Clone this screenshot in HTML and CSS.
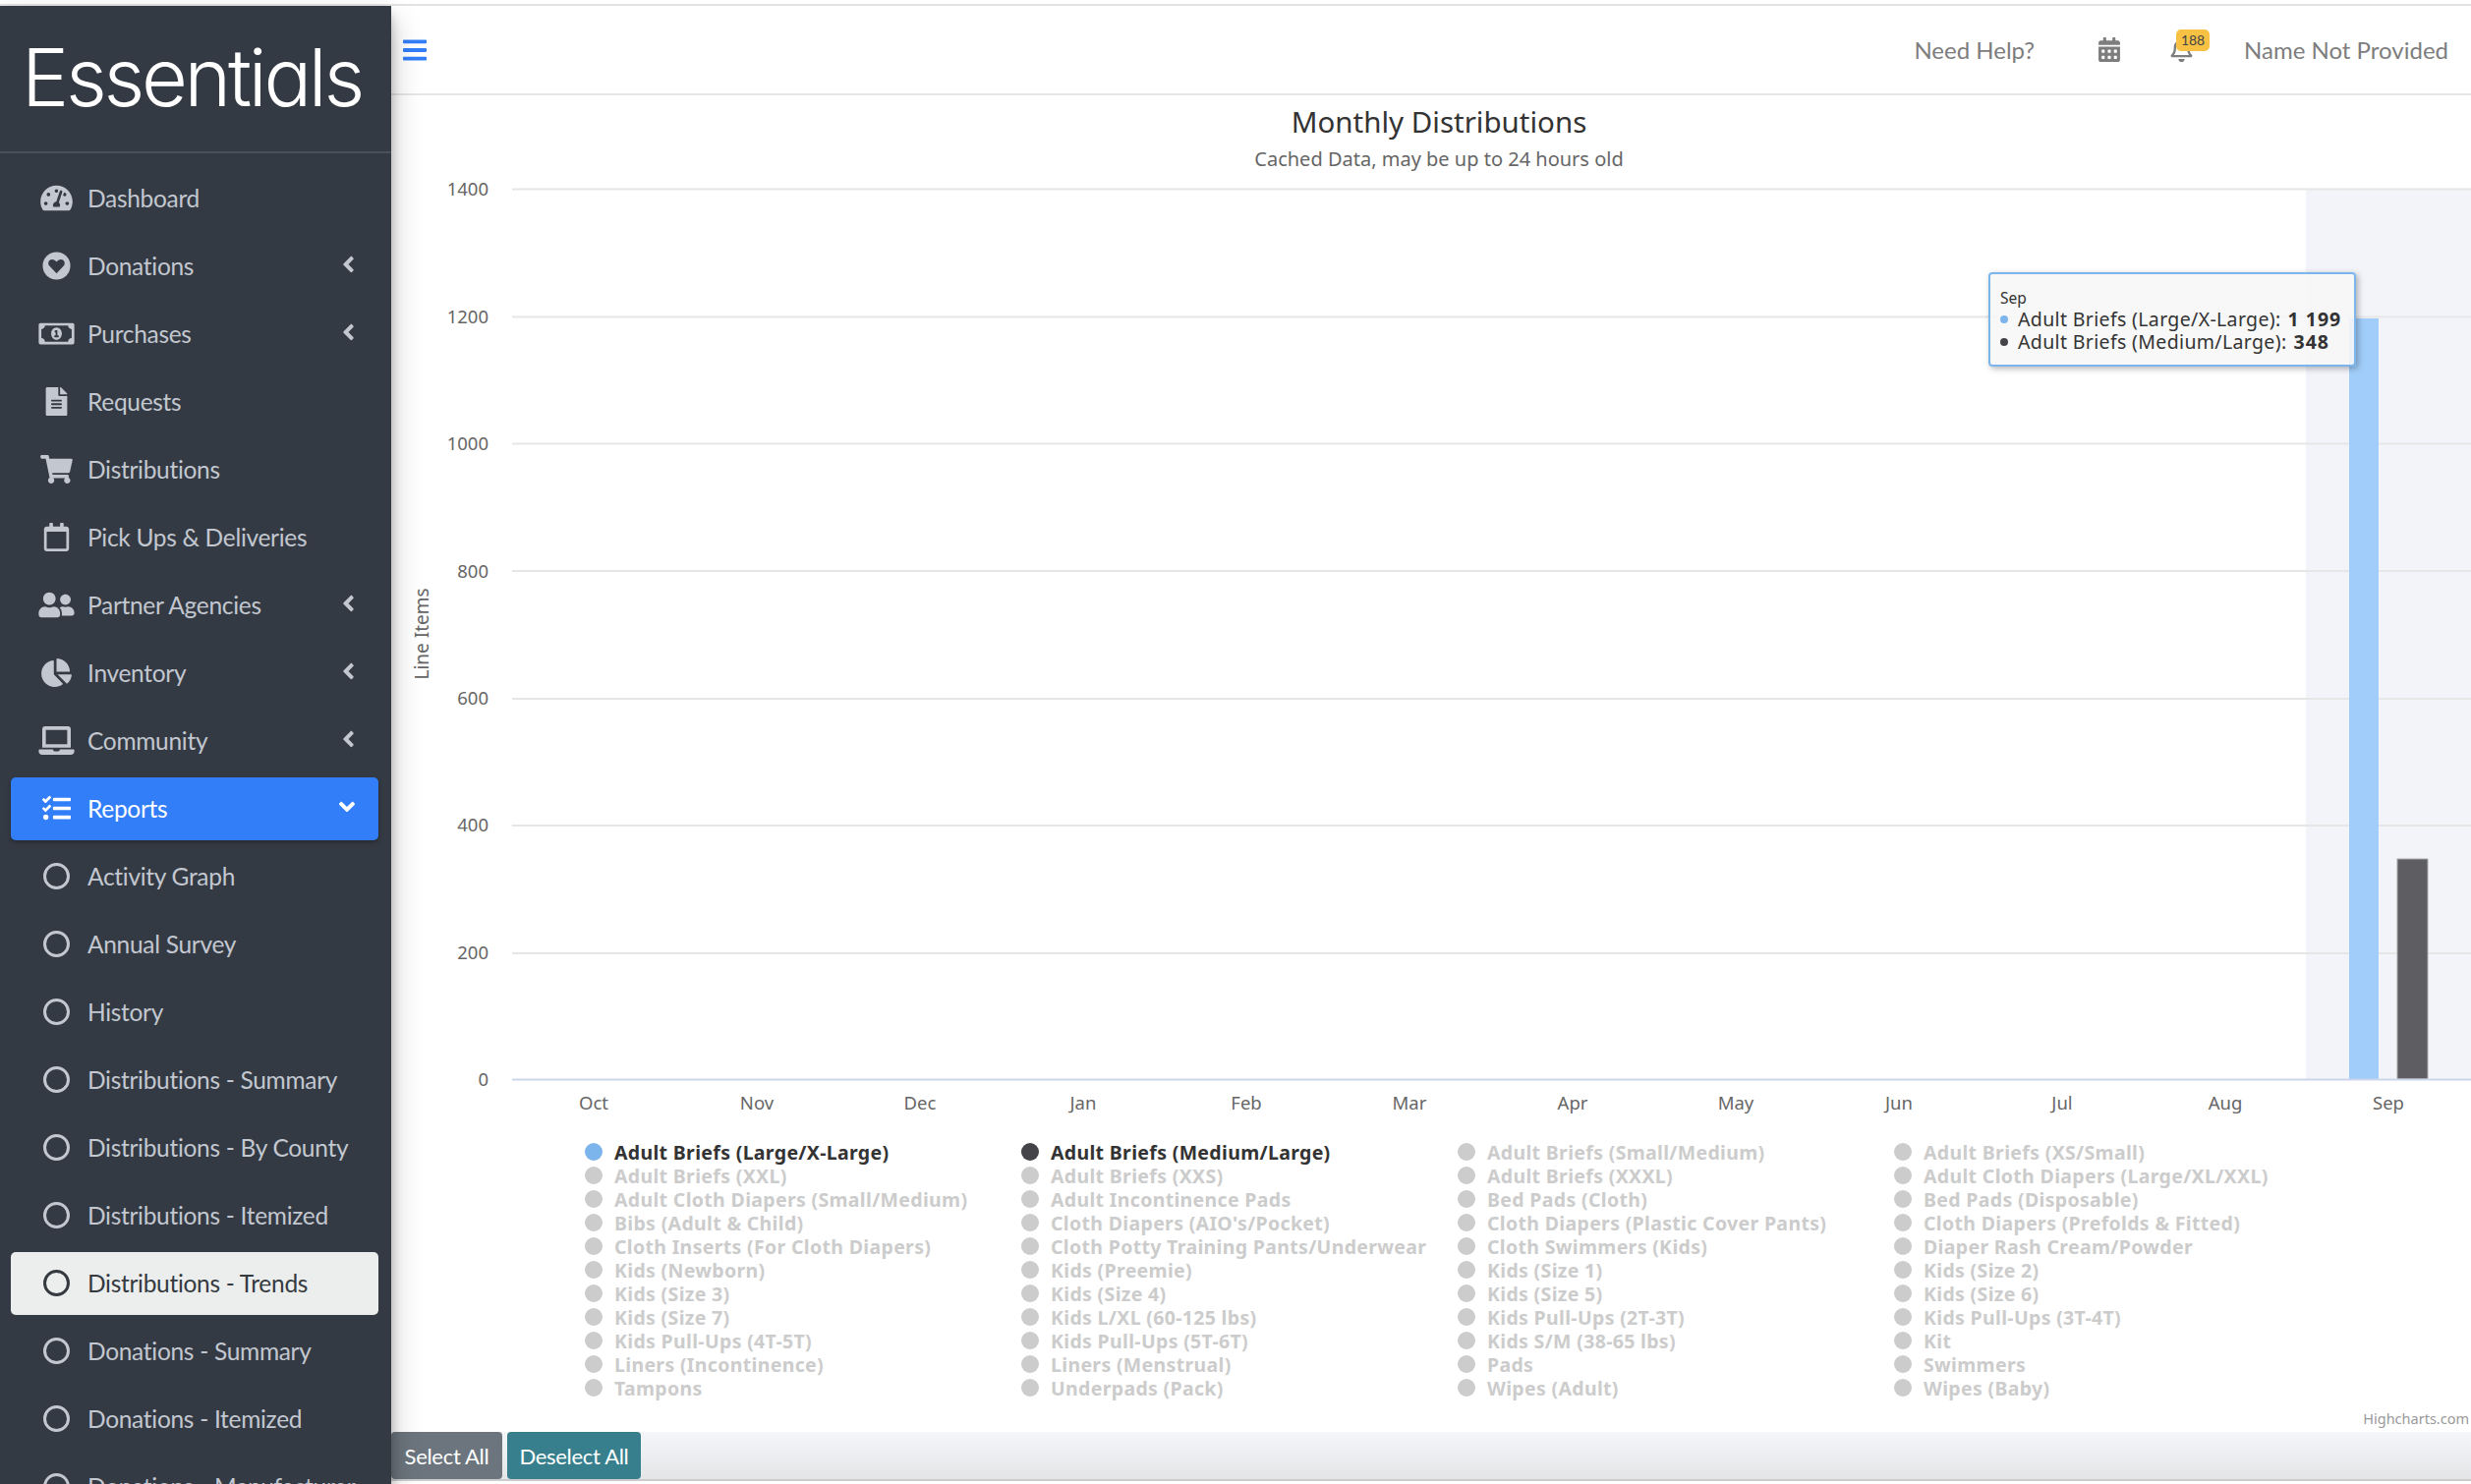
FILE: index.html
```html
<!DOCTYPE html>
<html lang="en">
  <head>
    <meta charset="UTF-8" />
    <title>Essentials - Distributions Trends</title>
    <link rel="stylesheet" href="styles.css">
  </head>
  <body>
    <div id="app">
      <aside id="sidebar">
        <div class="brand">Essentials</div>
        <ul class="nav">
          <li class="nav-item">
            <svg class="nav-icon" viewBox="0 0 576 512"><path d="M288 32C128.94 32 0 160.94 0 320c0 52.8 14.25 102.26 39.06 144.8 5.61 9.62 16.3 15.2 27.44 15.2h443c11.14 0 21.83-5.58 27.44-15.2C561.75 422.26 576 372.8 576 320c0-159.06-128.94-288-288-288zm0 64c14.71 0 26.58 10.13 30.32 23.65-1.11 2.26-2.64 4.23-3.45 6.67l-9.22 27.67c-5.13 3.49-10.97 6.01-17.64 6.01-17.67 0-32-14.33-32-32S270.33 96 288 96zM96 384c-17.67 0-32-14.33-32-32s14.33-32 32-32 32 14.33 32 32-14.33 32-32 32zm48-160c-17.67 0-32-14.33-32-32s14.33-32 32-32 32 14.33 32 32-14.33 32-32 32zm246.77-72.41l-61.33 184C343.13 347.33 352 364.54 352 384c0 11.72-3.38 22.55-8.88 32H232.88c-5.5-9.45-8.88-20.28-8.88-32 0-33.94 26.5-61.43 59.9-63.59l61.34-184.01c4.17-12.56 17.73-19.45 30.36-15.17 12.57 4.19 19.35 17.79 15.17 30.36zm14.66 57.2l15.52-46.55c3.47-1.29 7.13-2.23 11.05-2.23 17.67 0 32 14.33 32 32s-14.33 32-32 32c-11.38-.01-20.89-6.28-26.57-15.22zM480 384c-17.67 0-32-14.33-32-32s14.33-32 32-32 32 14.33 32 32-14.33 32-32 32z"/></svg>
            Dashboard
          </li>
          <li class="nav-item">
            <svg class="nav-icon" viewBox="0 0 512 512"><circle cx="256" cy="256" r="248"/><path class="heart-cut" d="M256 392L128 258C92 218 112 140 176 140c34 0 62 20 80 46 18-26 46-46 80-46 64 0 84 78 48 118z"/></svg>
            Donations
            <svg class="chevron" viewBox="0 0 256 512"><path d="M31.7 239l136-136c9.4-9.4 24.6-9.4 33.9 0l22.6 22.6c9.4 9.4 9.4 24.6 0 33.9L127.9 256l96.4 96.4c9.4 9.4 9.4 24.6 0 33.9L201.7 409c-9.4 9.4-24.6 9.4-33.9 0l-136-136c-9.5-9.4-9.5-24.6-.1-34z"/></svg>
          </li>
          <li class="nav-item">
            <svg class="nav-icon" viewBox="0 0 640 512"><path d="M320 144c-53.02 0-96 50.14-96 112 0 61.85 42.98 112 96 112 53 0 96-50.13 96-112 0-61.86-42.98-112-96-112zm40 168c0 4.42-3.58 8-8 8h-64c-4.42 0-8-3.58-8-8v-16c0-4.42 3.58-8 8-8h16v-55.44l-.47.31a7.992 7.992 0 0 1-11.09-2.22l-8.88-13.31a7.992 7.992 0 0 1 2.22-11.09l15.33-10.22a23.99 23.99 0 0 1 13.31-4.03H328c4.42 0 8 3.58 8 8v88h16c4.42 0 8 3.58 8 8v16zM608 64H32C14.33 64 0 78.33 0 96v320c0 17.67 14.33 32 32 32h576c17.67 0 32-14.33 32-32V96c0-17.67-14.33-32-32-32zm-16 272c-35.35 0-64 28.65-64 64H112c0-35.35-28.65-64-64-64V176c35.35 0 64-28.65 64-64h416c0 35.35 28.65 64 64 64v160z"/></svg>
            Purchases
            <svg class="chevron" viewBox="0 0 256 512"><path d="M31.7 239l136-136c9.4-9.4 24.6-9.4 33.9 0l22.6 22.6c9.4 9.4 9.4 24.6 0 33.9L127.9 256l96.4 96.4c9.4 9.4 9.4 24.6 0 33.9L201.7 409c-9.4 9.4-24.6 9.4-33.9 0l-136-136c-9.5-9.4-9.5-24.6-.1-34z"/></svg>
          </li>
          <li class="nav-item">
            <svg class="nav-icon" viewBox="0 0 384 512"><path d="M224 136V0H24C10.7 0 0 10.7 0 24v464c0 13.3 10.7 24 24 24h336c13.3 0 24-10.7 24-24V160H248c-13.2 0-24-10.8-24-24zm64 236c0 6.6-5.4 12-12 12H108c-6.6 0-12-5.4-12-12v-8c0-6.6 5.4-12 12-12h168c6.6 0 12 5.4 12 12v8zm0-64c0 6.6-5.4 12-12 12H108c-6.6 0-12-5.4-12-12v-8c0-6.6 5.4-12 12-12h168c6.6 0 12 5.4 12 12v8zm0-72v8c0 6.6-5.4 12-12 12H108c-6.6 0-12-5.4-12-12v-8c0-6.6 5.4-12 12-12h168c6.6 0 12 5.4 12 12zm96-114.1v6.1H256V0h6.1c6.4 0 12.5 2.5 17 7l97.9 98c4.5 4.5 7 10.6 7 16.9z"/></svg>
            Requests
          </li>
          <li class="nav-item">
            <svg class="nav-icon" viewBox="0 0 576 512"><path d="M528.12 301.319l47.273-208C578.806 78.301 567.391 64 551.99 64H159.208l-9.166-44.81C147.758 8.021 137.93 0 126.529 0H24C10.745 0 0 10.745 0 24v16c0 13.255 10.745 24 24 24h69.883l70.248 343.435C147.325 417.1 136 435.222 136 456c0 30.928 25.072 56 56 56s56-25.072 56-56c0-15.674-6.447-29.835-16.824-40h209.647C430.447 426.165 424 440.326 424 456c0 30.928 25.072 56 56 56s56-25.072 56-56c0-22.172-12.888-41.332-31.579-50.405l5.517-24.276c3.413-15.018-8.002-29.319-23.403-29.319H218.117l-6.545-32h293.145c11.206 0 20.92-7.754 23.403-18.681z"/></svg>
            Distributions
          </li>
          <li class="nav-item">
            <svg class="nav-icon" viewBox="0 0 448 512"><path d="M400 64h-48V12c0-6.6-5.4-12-12-12h-40c-6.6 0-12 5.4-12 12v52H160V12c0-6.6-5.4-12-12-12h-40c-6.6 0-12 5.4-12 12v52H48C21.5 64 0 85.5 0 112v352c0 26.5 21.5 48 48 48h352c26.5 0 48-21.5 48-48V112c0-26.5-21.5-48-48-48zm-6 400H54c-3.3 0-6-2.7-6-6V160h352v298c0 3.3-2.7 6-6 6z"/></svg>
            Pick Ups &amp; Deliveries
          </li>
          <li class="nav-item">
            <svg class="nav-icon" viewBox="0 0 640 512"><path d="M192 256c61.9 0 112-50.1 112-112S253.9 32 192 32 80 82.1 80 144s50.1 112 112 112zm76.8 32h-8.3c-20.8 10-43.9 16-68.5 16s-47.6-6-68.5-16h-8.3C51.6 288 0 339.6 0 403.2V432c0 26.5 21.5 48 48 48h288c26.5 0 48-21.5 48-48v-28.8c0-63.6-51.6-115.2-115.2-115.2zM480 256c53 0 96-43 96-96s-43-96-96-96-96 43-96 96 43 96 96 96zm48 32h-3.8c-13.9 4.8-28.6 8-44.2 8s-30.3-3.2-44.2-8H432c-20.4 0-39.2 5.9-55.7 15.4 24.4 26.3 39.7 61.2 39.7 99.8v38.4c0 2.2-.5 4.3-.6 6.4H592c26.5 0 48-21.5 48-48 0-61.9-50.1-112-112-112z"/></svg>
            Partner Agencies
            <svg class="chevron" viewBox="0 0 256 512"><path d="M31.7 239l136-136c9.4-9.4 24.6-9.4 33.9 0l22.6 22.6c9.4 9.4 9.4 24.6 0 33.9L127.9 256l96.4 96.4c9.4 9.4 9.4 24.6 0 33.9L201.7 409c-9.4 9.4-24.6 9.4-33.9 0l-136-136c-9.5-9.4-9.5-24.6-.1-34z"/></svg>
          </li>
          <li class="nav-item">
            <svg class="nav-icon" viewBox="0 0 544 512"><path d="M527.79 288H290.5l158.03 158.03c6.04 6.04 15.98 6.53 22.19.68 38.7-36.46 65.32-85.61 73.13-140.86 1.34-9.46-6.51-17.85-16.06-17.85zm-15.83-64.8C503.72 103.74 408.26 8.28 288.8.04 279.68-.59 272 7.1 272 16.24V240h223.77c9.14 0 16.82-7.68 16.19-16.8zM224 288V50.71c0-9.55-8.39-17.4-17.84-16.06C86.99 51.49-4.1 155.6.14 280.37 4.5 408.51 114.83 513.59 243.03 511.98c50.4-.63 96.97-16.87 135.26-44.03 7.9-5.6 8.42-17.23 1.57-24.08L224 288z"/></svg>
            Inventory
            <svg class="chevron" viewBox="0 0 256 512"><path d="M31.7 239l136-136c9.4-9.4 24.6-9.4 33.9 0l22.6 22.6c9.4 9.4 9.4 24.6 0 33.9L127.9 256l96.4 96.4c9.4 9.4 9.4 24.6 0 33.9L201.7 409c-9.4 9.4-24.6 9.4-33.9 0l-136-136c-9.5-9.4-9.5-24.6-.1-34z"/></svg>
          </li>
          <li class="nav-item">
            <svg class="nav-icon" viewBox="0 0 640 512"><path d="M624 416H381.54c-.74 19.81-14.71 32-32.74 32H288c-18.69 0-33.02-17.47-32.77-32H16c-8.8 0-16 7.2-16 16v16c0 35.2 28.8 64 64 64h512c35.2 0 64-28.8 64-64v-16c0-8.8-7.2-16-16-16zM576 48c0-26.4-21.6-48-48-48H112C85.6 0 64 21.6 64 48v336h512V48zm-64 272H128V64h384v256z"/></svg>
            Community
            <svg class="chevron" viewBox="0 0 256 512"><path d="M31.7 239l136-136c9.4-9.4 24.6-9.4 33.9 0l22.6 22.6c9.4 9.4 9.4 24.6 0 33.9L127.9 256l96.4 96.4c9.4 9.4 9.4 24.6 0 33.9L201.7 409c-9.4 9.4-24.6 9.4-33.9 0l-136-136c-9.5-9.4-9.5-24.6-.1-34z"/></svg>
          </li>
          <li class="nav-item active">
            <svg class="nav-icon" viewBox="0 0 512 512"><path d="M139.61 35.5a12 12 0 0 0-17 0L58.93 98.81l-22.7-22.12a12 12 0 0 0-17 0L3.53 92.41a12 12 0 0 0 0 17l47.59 47.4a12.78 12.78 0 0 0 17.61 0l15.59-15.62L156.52 69a12.09 12.09 0 0 0 .09-17zm0 159.19a12 12 0 0 0-17 0l-63.68 63.72-22.7-22.1a12 12 0 0 0-17 0L3.53 252a12 12 0 0 0 0 17L51 316.5a12.77 12.77 0 0 0 17.6 0l15.7-15.69 72.2-72.22a12 12 0 0 0 .09-16.9zM64 368c-26.49 0-48.59 21.5-48.59 48S37.53 464 64 464a48 48 0 0 0 0-96zm432 16H208a16 16 0 0 0-16 16v32a16 16 0 0 0 16 16h288a16 16 0 0 0 16-16v-32a16 16 0 0 0-16-16zm0-320H208a16 16 0 0 0-16 16v32a16 16 0 0 0 16 16h288a16 16 0 0 0 16-16V80a16 16 0 0 0-16-16zm0 160H208a16 16 0 0 0-16 16v32a16 16 0 0 0 16 16h288a16 16 0 0 0 16-16v-32a16 16 0 0 0-16-16z"/></svg>
            Reports
            <svg class="chevron-open" viewBox="0 0 320 512"><path d="M143 352.3L7 216.3c-9.4-9.4-9.4-24.6 0-33.9l22.6-22.6c9.4-9.4 24.6-9.4 33.9 0l96.4 96.4 96.4-96.4c9.4-9.4 24.6-9.4 33.9 0l22.6 22.6c9.4 9.4 9.4 24.6 0 33.9l-136 136c-9.2 9.4-24.4 9.4-33.8 0z"/></svg>
          </li>
          <li class="nav-item"><span class="nav-circle"></span>Activity Graph</li>
          <li class="nav-item"><span class="nav-circle"></span>Annual Survey</li>
          <li class="nav-item"><span class="nav-circle"></span>History</li>
          <li class="nav-item"><span class="nav-circle"></span>Distributions - Summary</li>
          <li class="nav-item"><span class="nav-circle"></span>Distributions - By County</li>
          <li class="nav-item"><span class="nav-circle"></span>Distributions - Itemized</li>
          <li class="nav-item current"><span class="nav-circle"></span>Distributions - Trends</li>
          <li class="nav-item"><span class="nav-circle"></span>Donations - Summary</li>
          <li class="nav-item"><span class="nav-circle"></span>Donations - Itemized</li>
          <li class="nav-item"><span class="nav-circle"></span>Donations - Manufacturer</li>
        </ul>
      </aside>

      <main id="content">
        <div id="topbar">
          <svg class="menu-toggle" viewBox="0 0 448 512"><path d="M16 132h416c8.837 0 16-7.163 16-16V76c0-8.837-7.163-16-16-16H16C7.163 60 0 67.163 0 76v40c0 8.837 7.163 16 16 16zm0 160h416c8.837 0 16-7.163 16-16v-40c0-8.837-7.163-16-16-16H16c-8.837 0-16 7.163-16 16v40c0 8.837 7.163 16 16 16zm0 160h416c8.837 0 16-7.163 16-16v-40c0-8.837-7.163-16-16-16H16c-8.837 0-16 7.163-16 16v40c0 8.837 7.163 16 16 16z"/></svg>
          <div class="top-links">
            <span>Need Help?</span>
            <svg class="top-calendar" viewBox="0 0 448 512"><path d="M0 464c0 26.5 21.5 48 48 48h352c26.5 0 48-21.5 48-48V192H0v272zm320-196c0-6.6 5.4-12 12-12h40c6.6 0 12 5.4 12 12v40c0 6.6-5.4 12-12 12h-40c-6.6 0-12-5.4-12-12v-40zm0 128c0-6.6 5.4-12 12-12h40c6.6 0 12 5.4 12 12v40c0 6.6-5.4 12-12 12h-40c-6.6 0-12-5.4-12-12v-40zM192 268c0-6.6 5.4-12 12-12h40c6.6 0 12 5.4 12 12v40c0 6.6-5.4 12-12 12h-40c-6.6 0-12-5.4-12-12v-40zm0 128c0-6.6 5.4-12 12-12h40c6.6 0 12 5.4 12 12v40c0 6.6-5.4 12-12 12h-40c-6.6 0-12-5.4-12-12v-40zM64 268c0-6.6 5.4-12 12-12h40c6.6 0 12 5.4 12 12v40c0 6.6-5.4 12-12 12H76c-6.6 0-12-5.4-12-12v-40zm0 128c0-6.6 5.4-12 12-12h40c6.6 0 12 5.4 12 12v40c0 6.6-5.4 12-12 12H76c-6.6 0-12-5.4-12-12v-40zM400 64h-48V16c0-8.8-7.2-16-16-16h-32c-8.8 0-16 7.2-16 16v48H160V16c0-8.8-7.2-16-16-16h-32c-8.8 0-16 7.2-16 16v48H48C21.5 64 0 85.5 0 112v48h448v-48c0-26.5-21.5-48-48-48z"/></svg>
            <div class="bell-wrap">
              <svg class="top-bell" viewBox="0 0 448 512"><path d="M439.39 362.29c-19.32-20.76-55.47-51.99-55.47-154.29 0-77.7-54.48-139.9-127.94-155.16V32c0-17.67-14.32-32-31.98-32s-31.98 14.33-31.98 32v20.84C118.56 68.1 64.08 130.3 64.08 208c0 102.3-36.15 133.53-55.47 154.29-6 6.45-8.66 14.16-8.61 21.71.11 16.4 12.98 32 32.1 32h383.8c19.12 0 32-15.6 32.1-32 .05-7.55-2.61-15.27-8.61-21.71zM67.53 368c21.22-27.97 44.42-74.33 44.53-159.42 0-.2-.06-.38-.06-.58 0-61.86 50.14-112 112-112s112 50.14 112 112c0 .2-.06.38-.06.58.11 85.1 23.31 131.46 44.53 159.42H67.53zM224 512c35.32 0 63.97-28.65 63.97-64H160.03c0 35.35 28.65 64 63.97 64z"/></svg>
              <span class="badge">188</span>
            </div>
            <span>Name Not Provided</span>
          </div>
        </div>

        <section id="chart">
          <h2 class="chart-title">Monthly Distributions</h2>
          <p class="chart-subtitle">Cached Data, may be up to 24 hours old</p>

          <svg class="plot" viewBox="0 0 2116 970">
            <rect class="hover-band" x="1948" y="16" width="168" height="906"/>
            <g class="grid">
              <line x1="123" x2="2116" y1="16.5" y2="16.5"/>
              <line x1="123" x2="2116" y1="146.5" y2="146.5"/>
              <line x1="123" x2="2116" y1="275.5" y2="275.5"/>
              <line x1="123" x2="2116" y1="405" y2="405"/>
              <line x1="123" x2="2116" y1="535" y2="535"/>
              <line x1="123" x2="2116" y1="664" y2="664"/>
              <line x1="123" x2="2116" y1="794" y2="794"/>
            </g>
            <rect class="bar-large" x="1992" y="148" width="30" height="774"/>
            <rect class="bar-medium" x="2041" y="698" width="31" height="224"/>
            <line class="axis-line" x1="123" x2="2116" y1="922.5" y2="922.5"/>
            <g class="y-labels">
              <text x="99" y="23">1400</text>
              <text x="99" y="153">1200</text>
              <text x="99" y="282">1000</text>
              <text x="99" y="412">800</text>
              <text x="99" y="541">600</text>
              <text x="99" y="670">400</text>
              <text x="99" y="800">200</text>
              <text x="99" y="929">0</text>
            </g>
            <g class="x-labels">
              <text x="206" y="953">Oct</text>
              <text x="372" y="953">Nov</text>
              <text x="538" y="953">Dec</text>
              <text x="704" y="953">Jan</text>
              <text x="870" y="953">Feb</text>
              <text x="1036" y="953">Mar</text>
              <text x="1202" y="953">Apr</text>
              <text x="1368" y="953">May</text>
              <text x="1534" y="953">Jun</text>
              <text x="1700" y="953">Jul</text>
              <text x="1866" y="953">Aug</text>
              <text x="2032" y="953">Sep</text>
            </g>
            <text class="y-title" transform="translate(38 469) rotate(-90)">Line Items</text>
          </svg>

          <ul class="legend">
            <li class="legend-item shown"><i class="dot dot-large"></i>Adult Briefs (Large/X-Large)</li>
            <li class="legend-item shown"><i class="dot dot-medium"></i>Adult Briefs (Medium/Large)</li>
            <li class="legend-item"><i class="dot"></i>Adult Briefs (Small/Medium)</li>
            <li class="legend-item"><i class="dot"></i>Adult Briefs (XS/Small)</li>
            <li class="legend-item"><i class="dot"></i>Adult Briefs (XXL)</li>
            <li class="legend-item"><i class="dot"></i>Adult Briefs (XXS)</li>
            <li class="legend-item"><i class="dot"></i>Adult Briefs (XXXL)</li>
            <li class="legend-item"><i class="dot"></i>Adult Cloth Diapers (Large/XL/XXL)</li>
            <li class="legend-item"><i class="dot"></i>Adult Cloth Diapers (Small/Medium)</li>
            <li class="legend-item"><i class="dot"></i>Adult Incontinence Pads</li>
            <li class="legend-item"><i class="dot"></i>Bed Pads (Cloth)</li>
            <li class="legend-item"><i class="dot"></i>Bed Pads (Disposable)</li>
            <li class="legend-item"><i class="dot"></i>Bibs (Adult &amp; Child)</li>
            <li class="legend-item"><i class="dot"></i>Cloth Diapers (AIO's/Pocket)</li>
            <li class="legend-item"><i class="dot"></i>Cloth Diapers (Plastic Cover Pants)</li>
            <li class="legend-item"><i class="dot"></i>Cloth Diapers (Prefolds &amp; Fitted)</li>
            <li class="legend-item"><i class="dot"></i>Cloth Inserts (For Cloth Diapers)</li>
            <li class="legend-item"><i class="dot"></i>Cloth Potty Training Pants/Underwear</li>
            <li class="legend-item"><i class="dot"></i>Cloth Swimmers (Kids)</li>
            <li class="legend-item"><i class="dot"></i>Diaper Rash Cream/Powder</li>
            <li class="legend-item"><i class="dot"></i>Kids (Newborn)</li>
            <li class="legend-item"><i class="dot"></i>Kids (Preemie)</li>
            <li class="legend-item"><i class="dot"></i>Kids (Size 1)</li>
            <li class="legend-item"><i class="dot"></i>Kids (Size 2)</li>
            <li class="legend-item"><i class="dot"></i>Kids (Size 3)</li>
            <li class="legend-item"><i class="dot"></i>Kids (Size 4)</li>
            <li class="legend-item"><i class="dot"></i>Kids (Size 5)</li>
            <li class="legend-item"><i class="dot"></i>Kids (Size 6)</li>
            <li class="legend-item"><i class="dot"></i>Kids (Size 7)</li>
            <li class="legend-item"><i class="dot"></i>Kids L/XL (60-125 lbs)</li>
            <li class="legend-item"><i class="dot"></i>Kids Pull-Ups (2T-3T)</li>
            <li class="legend-item"><i class="dot"></i>Kids Pull-Ups (3T-4T)</li>
            <li class="legend-item"><i class="dot"></i>Kids Pull-Ups (4T-5T)</li>
            <li class="legend-item"><i class="dot"></i>Kids Pull-Ups (5T-6T)</li>
            <li class="legend-item"><i class="dot"></i>Kids S/M (38-65 lbs)</li>
            <li class="legend-item"><i class="dot"></i>Kit</li>
            <li class="legend-item"><i class="dot"></i>Liners (Incontinence)</li>
            <li class="legend-item"><i class="dot"></i>Liners (Menstrual)</li>
            <li class="legend-item"><i class="dot"></i>Pads</li>
            <li class="legend-item"><i class="dot"></i>Swimmers</li>
            <li class="legend-item"><i class="dot"></i>Tampons</li>
            <li class="legend-item"><i class="dot"></i>Underpads (Pack)</li>
            <li class="legend-item"><i class="dot"></i>Wipes (Adult)</li>
            <li class="legend-item"><i class="dot"></i>Wipes (Baby)</li>
          </ul>
          <div class="credits">Highcharts.com</div>

          <div class="tooltip">
            <div class="tooltip-month">Sep</div>
            <div class="tooltip-row"><i class="tip-dot dot-large"></i>Adult Briefs (Large/X-Large): <b>1 199</b></div>
            <div class="tooltip-row"><i class="tip-dot dot-medium"></i>Adult Briefs (Medium/Large): <b>348</b></div>
          </div>
        </section>

        <div id="chart-actions">
          <button class="btn btn-select">Select All</button>
          <button class="btn btn-deselect">Deselect All</button>
        </div>
      </main>
    </div>
  </body>
</html>
```

FILE: styles.css
```css
* {
  box-sizing: border-box;
}
html, body {
  margin: 0;
  height: 1510px;
  overflow: hidden;
  background: #fff;
}
body {
  padding-top: 4px;
  font-family: "Lato", "Noto Sans", sans-serif;
  font-size: 24.5px;
}
#app {
  display: flex;
  height: 1506px;
  border-top: 2px solid #e3e3e3;
}

/* sidebar */
#sidebar {
  flex: 0 0 398px;
  position: relative;
  z-index: 2;
  overflow: hidden;
  background: #343a43;
  color: #c2c7d0;
  box-shadow: 0 14px 28px rgba(0, 0, 0, .25), 0 10px 10px rgba(0, 0, 0, .22);
}
.brand {
  height: 150px;
  border-bottom: 2px solid #4b515b;
  padding: 23px 0 0 22px;
  color: #fff;
  font-family: "Inter", sans-serif;
  font-weight: 300;
  font-size: 81px;
  line-height: 100px;
  letter-spacing: -3.3px;
  font-feature-settings: "cv11";
}
.nav {
  list-style: none;
  margin: 0;
  padding: 14px 13px 0 11px;
}
.nav-item {
  display: flex;
  align-items: center;
  height: 64px;
  margin-bottom: 5px;
  padding: 0 24px 2px 28px;
  border-radius: 5px;
  letter-spacing: -.3px;
  white-space: nowrap;
}
.nav-icon {
  flex: 0 0 37px;
  height: 29px;
  margin-right: 13px;
  fill: currentColor;
}
.nav-circle {
  flex: 0 0 27px;
  height: 27px;
  margin: 0 18px 0 5px;
  border: 3px solid currentColor;
  border-radius: 50%;
}
.heart-cut {
  fill: #343a43;
}
.chevron {
  width: 13px;
  height: 26px;
  margin: -2px 0 0 auto;
  fill: currentColor;
}
.chevron-open {
  width: 16px;
  height: 26px;
  margin: -2px 0 0 auto;
  fill: currentColor;
}
.nav-item.active {
  background: #327ef8;
  color: #fff;
  box-shadow: 0 2px 4px rgba(0, 0, 0, .3);
}
.nav-item.current {
  background: #eceeee;
  color: #343a40;
}

/* top bar */
#content {
  flex: 1;
  min-width: 0;
  display: flex;
  flex-direction: column;
  padding-bottom: 3px;
}
#topbar {
  display: flex;
  align-items: center;
  justify-content: space-between;
  flex: 0 0 91px;
  padding: 0 23px 0 12px;
  border-bottom: 2px solid #e4e6ea;
}
.menu-toggle {
  width: 24px;
  height: 28px;
  fill: #327ef8;
}
.top-links {
  display: flex;
  align-items: center;
  color: #7d7d7d;
  font-size: 24px;
}
.top-calendar {
  width: 22px;
  height: 25px;
  margin: 0 51px 0 65px;
  fill: #7d7d7d;
}
.bell-wrap {
  position: relative;
  width: 23px;
  height: 25px;
  margin-right: 52px;
}
.top-bell {
  width: 23px;
  height: 25px;
  fill: #7d7d7d;
}
.badge {
  position: absolute;
  top: -8px;
  left: 6px;
  width: 34px;
  height: 22px;
  border-radius: 5px;
  background: #f7c244;
  color: #444;
  font-size: 14px;
  line-height: 22px;
  text-align: center;
}

/* chart */
#chart {
  flex: 1;
  position: relative;
  background: #fff;
  font-family: "Noto Sans", sans-serif;
}
.chart-title {
  margin: 0;
  padding: 9px 0 0 16px;
  color: #333;
  font-weight: 400;
  font-size: 29.5px;
  line-height: 36px;
  text-align: center;
}
.chart-subtitle {
  margin: 7px 0 0;
  padding-left: 16px;
  color: #666;
  font-size: 20px;
  line-height: 26px;
  text-align: center;
}
.plot {
  display: block;
  width: 2116px;
  height: 970px;
  margin-top: 1px;
}
.hover-band {
  fill: #f2f4fa;
}
.grid line {
  stroke: #e6e6e6;
  stroke-width: 2;
}
.axis-line {
  stroke: #ccd6eb;
  stroke-width: 2;
}
.bar-large {
  fill: #a0cdf9;
}
.bar-medium {
  fill: #5e5d62;
  stroke: #aaa;
  stroke-width: 1;
}
.plot text {
  fill: #666;
  font-size: 18.5px;
}
.y-labels text {
  text-anchor: end;
}
.x-labels text, .y-title {
  text-anchor: middle;
}
.plot .y-title {
  font-size: 19px;
}
.legend {
  list-style: none;
  display: grid;
  grid-template-columns: repeat(4, 444px);
  grid-auto-rows: 24px;
  margin: 14px 0 0;
  padding: 0 0 0 197px;
}
.legend-item {
  display: flex;
  align-items: center;
  color: #ccc;
  font-weight: 700;
  font-size: 19.5px;
  letter-spacing: .33px;
  white-space: nowrap;
}
.legend-item.shown {
  color: #333;
}
.dot {
  flex: 0 0 18px;
  height: 18px;
  margin-right: 12px;
  border-radius: 50%;
  background: #ccc;
}
.dot-large {
  background: #7cb5ec;
}
.dot-medium {
  background: #434348;
}
.credits {
  margin-top: 9px;
  padding-right: 2px;
  color: #999;
  font-size: 14.5px;
  line-height: 20px;
  text-align: right;
}
.tooltip {
  position: absolute;
  left: 1625px;
  top: 180px;
  width: 374px;
  height: 96px;
  padding: 14px 10px;
  border: 2px solid #7cb5ec;
  border-radius: 4px;
  background: rgba(247, 247, 247, .88);
  box-shadow: 2px 2px 6px rgba(0, 0, 0, .3);
  color: #333;
  font-size: 19.5px;
  letter-spacing: .35px;
  line-height: 23px;
  white-space: nowrap;
}
.tooltip-month {
  height: 20px;
  font-size: 15.5px;
  line-height: 20px;
  letter-spacing: 0;
}
.tooltip-row {
  display: flex;
  align-items: center;
  gap: 7px;
}
.tooltip-row b {
  font-weight: 700;
  letter-spacing: 1px;
}
.tip-dot {
  flex: 0 0 8px;
  height: 8px;
  margin-right: 3px;
  border-radius: 50%;
}

/* buttons under the chart */
#chart-actions {
  display: flex;
  gap: 5px;
  flex: 0 0 50px;
  border-bottom: 2px solid #ccc;
  background: linear-gradient(#f4f6f9, #e4e5e7);
}
.btn {
  height: 48px;
  padding: 0;
  border: 0;
  border-radius: 4px;
  color: #fff;
  font-family: "Lato", "Noto Sans", sans-serif;
  font-size: 22px;
  letter-spacing: -.3px;
  white-space: nowrap;
}
.btn-select {
  width: 113px;
  background: #6c757d;
}
.btn-deselect {
  width: 136px;
  background: #377f8c;
}
```
